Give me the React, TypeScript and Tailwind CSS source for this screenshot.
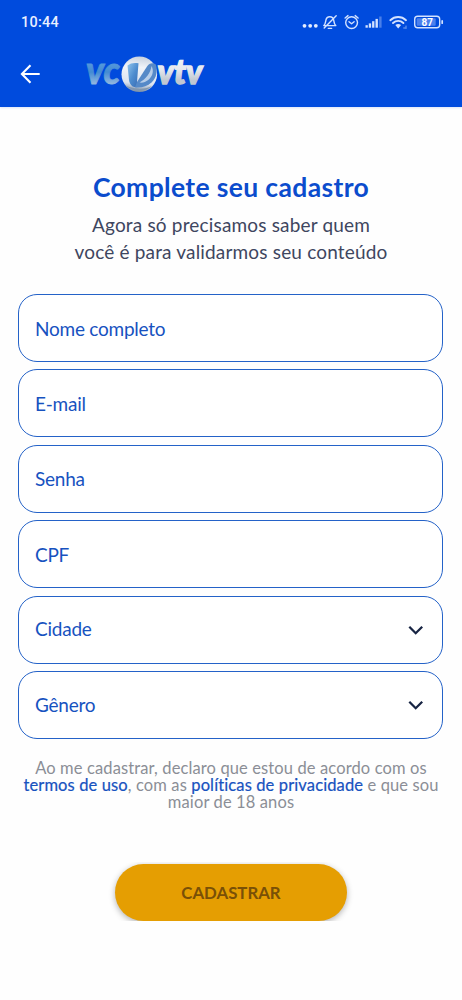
import React, { useState } from 'react';

const textFields = [
  { name: 'nome', label: 'Nome completo' },
  { name: 'email', label: 'E-mail' },
  { name: 'senha', label: 'Senha' },
  { name: 'cpf', label: 'CPF' },
];

const selectFields = [
  { name: 'cidade', label: 'Cidade' },
  { name: 'genero', label: 'Gênero' },
];

const StatusIcons = () => (
  <svg width="146" height="24" viewBox="300 10 146 24" fill="none" stroke="#d3e2ff" strokeWidth="1.4" strokeLinecap="round" strokeLinejoin="round">
    {/* Dots */}
    <g fill="#e4edff" stroke="none">
      <circle cx="304.5" cy="25.8" r="1.9" />
      <circle cx="310.2" cy="25.8" r="1.9" />
      <circle cx="315.8" cy="25.8" r="1.9" />
    </g>
    {/* Muted bell */}
    <path d="M323.8 25.6c1.600-1.300 1.800-3.700 2.100-5.400.4-2.400 1.800-3.500 3.900-3.500s3.500 1.100 3.900 3.500c.3 1.700.5 4.100 2.100 5.400zM328.300 28.400h3.300M336.200 15.800l-12 12.200" />
    {/* Alarm */}
    <circle cx="351.6" cy="22.6" r="5.9" />
    <path d="M349 21.700l2.600 2 2.500-2M345.100 18l2.900-2.400M358.100 18l-2.900-2.400" />
    {/* Signal */}
    <g fill="#d3e2ff" stroke="none">
      <rect x="365.5" y="25.2" width="2.3" height="2.5" />
      <rect x="368.8" y="23.4" width="2.3" height="4.3" />
      <rect x="372.1" y="21.2" width="2.3" height="6.5" />
      <rect x="375.5" y="18.9" width="2.4" height="8.8" />
      <rect x="379.2" y="16.5" width="2.4" height="11.2" opacity=".35" />
    </g>
    {/* Wifi */}
    <path d="M390.300 20.200c4.500-4.200 11.200-4.200 15.700 0M393 23c3-2.800 7.400-2.800 10.400 0" strokeWidth="1.9" />
    <path d="M395.300 25.100c1.900-1.600 3.900-1.600 5.800 0l-2.900 3.300z" fill="#d3e2ff" stroke="none" />
    <path d="M403.700 28h1.300M406 26v2.500" strokeWidth="1" opacity=".6" />
    {/* Battery */}
    <rect x="414.700" y="16.200" width="25" height="11.600" rx="3" />
    <rect x="416.700" y="18.200" width="19" height="7.600" rx="1" fill="#4b80ed" stroke="none" />
    <path d="M442.200 20.900v2.300" strokeWidth="1.7" />
    <text x="427.200" y="25.700" textAnchor="middle" fill="#fff" stroke="none" className="font-['Roboto',sans-serif] text-[10px] font-bold">87</text>
  </svg>
);

const Logo = () => (
  <svg width="124" height="60" viewBox="84 44 124 60">
    <defs>
      <linearGradient id="vc" x1="0" y1="0" x2="0" y2="1">
        <stop offset="0.25" stopColor="#5e9fe0" />
        <stop offset="0.55" stopColor="#438bd2" />
        <stop offset="0.8" stopColor="#8eb5df" />
      </linearGradient>
      <linearGradient id="vtv" x1="0" y1="0" x2="0" y2="1">
        <stop offset="0.2" stopColor="#f3f5f7" />
        <stop offset="0.5" stopColor="#e4e8ed" />
        <stop offset="0.75" stopColor="#c0c8d1" />
      </linearGradient>
      <linearGradient id="globe" x1=".5" y1="0" x2=".4" y2="1">
        <stop offset="0" stopColor="#c8d2df" />
        <stop offset="0.3" stopColor="#f1f4f9" />
        <stop offset="0.75" stopColor="#dbe3f0" />
        <stop offset="1" stopColor="#7388a0" />
      </linearGradient>
      <linearGradient id="blade" x1="0" y1="0" x2="1" y2="1">
        <stop offset="0" stopColor="#8fc3ec" />
        <stop offset="0.5" stopColor="#4d8ccf" />
        <stop offset="1" stopColor="#376ab2" />
      </linearGradient>
    </defs>
    <text x="86" y="84.300" textLength="34" lengthAdjust="spacingAndGlyphs" fill="url(#vc)" stroke="url(#vc)" strokeWidth=".8" className="font-['Lato',sans-serif] text-[37px] font-black italic">vc</text>
    <circle cx="139.300" cy="74.300" r="17.800" fill="url(#globe)" />
    {/* Left arm of the V */}
    <path d="M127.500 65.500c3-2.500 6.500-3 11-2.300l-1.500 18.800 2.500 4.500c-5.500 2-9.500-.5-10.500-6.500z" fill="url(#blade)" />
    {/* Right arm, curling round the globe */}
    <path d="M137 82l10-15.500c2.500-3.500 5.500-4.200 8.800-2 2.200 7 .4 13.500-4.300 18-4.500 4.200-10.500 5.500-16.500 4.800z" fill="#5589c8" />
    <path d="M139.500 82.500c6.500-3.500 11.200-9.500 12-16.500 3 5.500.5 11-3.300 14-2.500 2-5.500 3-8.700 2.500z" fill="#b8cee9" />
    <path d="M125.500 85.500c7 6.800 19.500 7.300 26.500.5-4.500 2.400-9.500 3.200-14 2.600-4.500-.3-8.600-1.300-12.500-3.100z" fill="#8197b0" />
    <text x="157.500" y="83.800" textLength="45" lengthAdjust="spacingAndGlyphs" fill="url(#vtv)" stroke="url(#vtv)" strokeWidth="1.5" className="font-['Lato',sans-serif] text-[35px] font-black italic">vtv</text>
  </svg>
);

const App: React.FC = () => {
  const [form, setForm] = useState<any>({});

  const fieldClass = "flex h-[68px] w-full shrink-0 items-center rounded-[19px] border-[1.3px] border-[#2462c8] bg-white pl-4 pr-[17px] text-[19px] tracking-[-0.24px] text-[#1752bf] placeholder:text-[#1752bf] outline-none";

  return (
    <div className="h-[1000px] w-[462px] overflow-hidden bg-[#fefefe] font-['Lato',sans-serif]">
      {/* Header */}
      <header className="h-[107px] bg-[#004bdd] shadow-[0_1px_2px_rgba(0,75,221,0.15)]">
        <div className="flex h-11 items-center justify-between pl-[21px] pr-4">
          <span className="pt-0.5 font-['Roboto',sans-serif] text-[14.4px] font-medium tracking-[0.3px] text-[#eaf0ff]">10:44</span>
          <StatusIcons />
        </div>
        <div className="flex h-[60px] items-center pl-5">
          <button aria-label="Voltar">
            <svg width="21" height="20" viewBox="0 0 21 20" fill="none" stroke="#fff" strokeWidth="2.1">
              <path d="M19.700 10H2.300M10.500 1.300L1.900 10l8.600 8.700" />
            </svg>
          </button>
          <div className="ml-[43px]">
            <Logo />
          </div>
        </div>
      </header>

      {/* Title */}
      <div className="pt-[63px] text-center">
        <h1 className="text-[26.5px] font-bold leading-[34px] tracking-[0.35px] text-[#0b4ccd]">Complete seu cadastro</h1>
        <p className="mt-[7px] text-[19px] leading-[27px] tracking-[0.17px] text-[#3e4660]">
          Agora só precisamos saber quem<br />você é para validarmos seu conteúdo
        </p>
      </div>

      {/* Form */}
      <form className="mt-[29px] flex flex-col gap-[7.4px] pl-[18px] pr-[19px]">
        {textFields.map((f) => (
          <input
            key={f.name}
            type={f.name === 'senha' ? 'password' : 'text'}
            placeholder={f.label}
            value={form[f.name] || ''}
            onChange={(e) => setForm({ ...form, [f.name]: e.target.value })}
            className={fieldClass}
          />
        ))}
        {selectFields.map((f) => (
          <button key={f.name} type="button" className={fieldClass}>
            <span className="flex-1 text-left">{f.label}</span>
            <svg width="18" height="12" viewBox="0 0 18 12" fill="none" stroke="#172443" strokeWidth="2.3">
              <path d="M2.300 2.800L8.700 9.200l6.500-6.400" />
            </svg>
          </button>
        ))}
      </form>

      <p className="mt-[21px] text-center text-[16.5px] leading-[16.8px] tracking-[0.12px] text-[#8b8e96]">
        Ao me cadastrar, declaro que estou de acordo com os<br />
        <a className="text-[#1752bf] [-webkit-text-stroke:0.2px_#1752bf]">termos de uso</a>, com as <a className="text-[#1752bf] [-webkit-text-stroke:0.2px_#1752bf]">políticas de privacidade</a> e que sou<br />
        maior de 18 anos
      </p>

      {/* Submit Button */}
      <div className="mt-[52px] flex h-[59px] justify-center overflow-hidden pt-0.5">
        <button className="h-[57px] w-[232px] rounded-full bg-[#e59e02] text-[16.8px] font-bold text-[#795007] shadow-[0_2px_6px_rgba(0,0,0,0.3)]">
          CADASTRAR
        </button>
      </div>
    </div>
  );
};

export default App;
